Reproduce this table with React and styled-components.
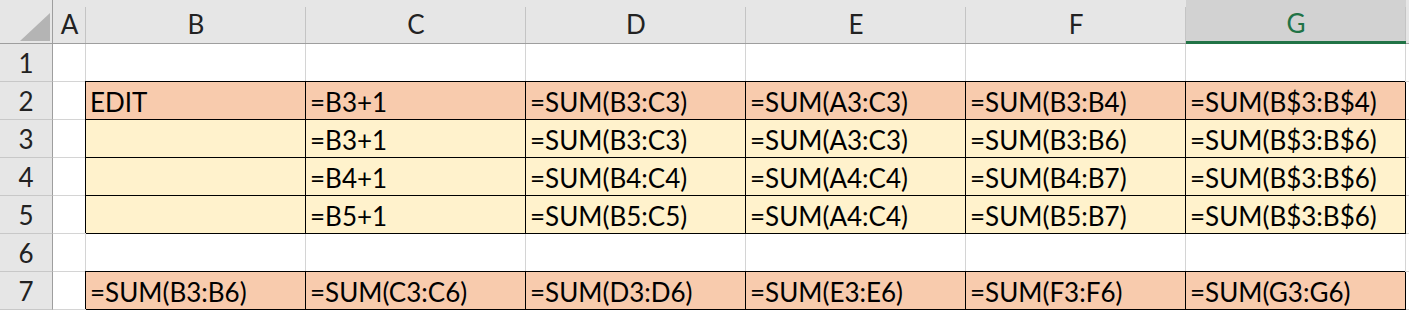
import React from 'react';
import styled, { createGlobalStyle } from 'styled-components';

const GlobalStyle = createGlobalStyle`
  body { margin: 0; background: #fff; font-family: Lato, "Open Sans", sans-serif; }
`;

const Sheet = styled.div`
  display: grid;
  grid-template-columns: 53px 33px repeat(6, 220px) 1fr;
  grid-template-rows: 44px repeat(7, 38px);
  width: 1409px;
  height: 310px;
  overflow: hidden;
`;

const Corner = styled.div`
  background: #e6e6e6;
  border-right: 1px solid #9e9e9e;
  border-bottom: 1px solid #9e9e9e;
  box-sizing: border-box;
  svg { display: block; }
`;

const ColHead = styled.div`
  display: flex;
  align-items: center;
  justify-content: center;
  padding-top: 5px;
  box-sizing: border-box;
  font-size: 26px;
  color: ${p => (p.$active ? '#217346' : '#222')};
  background: linear-gradient(#c4c4c4, #c4c4c4) right 7px / 1px calc(100% - 7px) no-repeat,
    ${p => (p.$active ? '#d2d2d2' : '#e6e6e6')};
  border-bottom: ${p => (p.$active ? '3px solid #217346' : '1px solid #9e9e9e')};
`;

const RowHead = styled.div`
  display: flex;
  align-items: center;
  justify-content: center;
  font-size: 26px;
  color: #222;
  background: #e6e6e6;
  border-right: 1px solid #9e9e9e;
  border-bottom: 1px solid #c8c8c8;
  box-sizing: border-box;
`;

const fills = { orange: '#f8cbad', yellow: '#fff2cc' };

const Cell = styled.div`
  display: flex;
  align-items: center;
  padding: 2px 0 0 4px;
  box-sizing: border-box;
  font-size: 26px;
  color: #000;
  white-space: nowrap;
  overflow: hidden;
  background: ${p => fills[p.$fill] || '#fff'};
  border-right: 1px solid ${p => (p.$fill ? '#000' : '#d4d4d4')};
  border-bottom: 1px solid ${p => (p.$fill ? '#000' : '#d4d4d4')};
  ${p => p.$fill && 'position: relative; z-index: 1; overflow: visible; box-shadow: -1px -1px 0 0 #000;'}
`;

const cols = ['A', 'B', 'C', 'D', 'E', 'F', 'G'];

const rows = [
  { fill: null, cells: ['', '', '', '', '', ''] },
  { fill: 'orange', cells: ['EDIT', '=B3+1', '=SUM(B3:C3)', '=SUM(A3:C3)', '=SUM(B3:B4)', '=SUM(B$3:B$4)'] },
  { fill: 'yellow', cells: ['', '=B3+1', '=SUM(B3:C3)', '=SUM(A3:C3)', '=SUM(B3:B6)', '=SUM(B$3:B$6)'] },
  { fill: 'yellow', cells: ['', '=B4+1', '=SUM(B4:C4)', '=SUM(A4:C4)', '=SUM(B4:B7)', '=SUM(B$3:B$6)'] },
  { fill: 'yellow', cells: ['', '=B5+1', '=SUM(B5:C5)', '=SUM(A4:C4)', '=SUM(B5:B7)', '=SUM(B$3:B$6)'] },
  { fill: null, cells: ['', '', '', '', '', ''] },
  { fill: 'orange', cells: ['=SUM(B3:B6)', '=SUM(C3:C6)', '=SUM(D3:D6)', '=SUM(E3:E6)', '=SUM(F3:F6)', '=SUM(G3:G6)'] },
];

const App = () => {
  return (
    <>
      <GlobalStyle />
      <Sheet>
        <Corner>
          <svg width="52" height="43" viewBox="0 0 52 43">
            <polygon points="20,41 50,41 50,13" fill="#b4b4b4" />
          </svg>
        </Corner>
        {cols.map(c => (
          <ColHead key={c} $active={c === 'G'}>{c}</ColHead>
        ))}
        <ColHead />
        {rows.map((r, i) => (
          <React.Fragment key={i}>
            <RowHead>{i + 1}</RowHead>
            <Cell />
            {r.cells.map((t, j) => (
              <Cell key={j} $fill={r.fill}>{t}</Cell>
            ))}
            <Cell />
          </React.Fragment>
        ))}
      </Sheet>
    </>
  );
};

export default App;
